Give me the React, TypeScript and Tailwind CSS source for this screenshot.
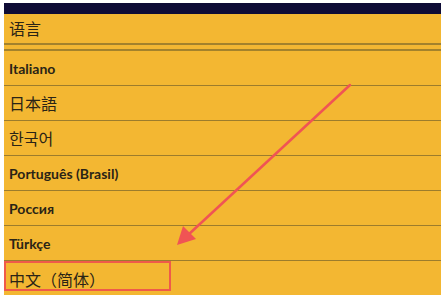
const ROWS: { label: string; cjk?: boolean }[] = [
  { label: 'Italiano' },
  { label: '日本語', cjk: true },
  { label: '한국어', cjk: true },
  { label: 'Português (Brasil)' },
  { label: 'Россия' },
  { label: 'Türkçe' },
  { label: '中文（简体）', cjk: true },
];

const latin = "font-['Lato','Liberation_Sans',sans-serif] text-[14px] font-bold";
const cjk =
  "font-['Noto_Sans_CJK_SC','Noto_Sans_CJK_KR','Noto_Sans_CJK_JP',sans-serif] text-[16px] font-normal";

export default function App() {
  return (
    <div className="relative h-[295px] w-[441px] overflow-hidden bg-white pl-[4px] pt-[3px]">
      <div className="flex h-full flex-col bg-[#f3b732] text-[#2a2416]">
        <div className="h-[11px] shrink-0 bg-[#0e0c36]" />
        <div className={`flex h-[31px] shrink-0 items-center border-b-2 border-[#a3822c] px-[5px] pb-[2px] ${cjk}`}>
          语言
        </div>
        <div className="h-[6px] shrink-0 border-b-2 border-[#a3822c]" />
        {ROWS.map((row, i) => (
          <div
            key={row.label}
            className={`flex h-[35px] shrink-0 items-center px-[5px] ${
              i < ROWS.length - 1 ? 'border-b border-[#9c7c2c]' : ''
            } ${row.cjk ? cjk : latin}`}
          >
            {row.label}
          </div>
        ))}
      </div>

      {/* annotation */}
      <div className="absolute left-[4px] top-[261px] h-[30px] w-[167px] border-[2.5px] border-[#ef5a4a]" />
      <svg className="pointer-events-none absolute left-0 top-0" width="441" height="295">
        <line x1="350" y1="85" x2="188" y2="235" stroke="#f05454" strokeWidth="2.5" strokeLinecap="round" />
        <polygon points="177,245 196,239 183,226" fill="#f05454" />
      </svg>
    </div>
  );
}
